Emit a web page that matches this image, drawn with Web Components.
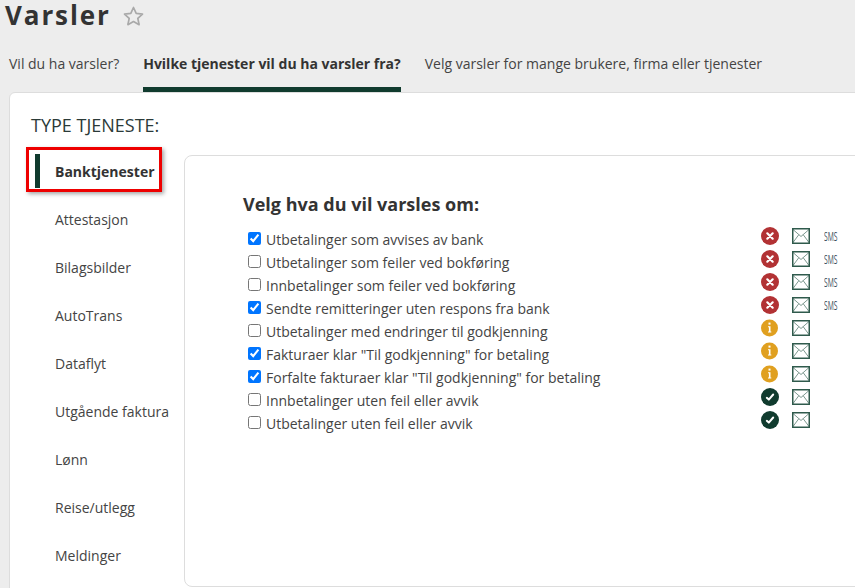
<!DOCTYPE html>
<html lang="nb"><head><meta charset="utf-8"><title>Varsler</title>
<style>
html,body{margin:0;height:100%;overflow:hidden;background:#ededed;font-family:"Open Sans",sans-serif;color:#333}
</style></head><body>
<varsler-page>
  <page-title slot="title">Varsler</page-title>
  <tab-item slot="tabs">Vil du ha varsler?</tab-item>
  <tab-item slot="tabs" active>Hvilke tjenester vil du ha varsler fra?</tab-item>
  <tab-item slot="tabs">Velg varsler for mange brukere, firma eller tjenester</tab-item>
  <nav-item slot="nav" active>Banktjenester</nav-item>
  <nav-item slot="nav">Attestasjon</nav-item>
  <nav-item slot="nav">Bilagsbilder</nav-item>
  <nav-item slot="nav">AutoTrans</nav-item>
  <nav-item slot="nav">Dataflyt</nav-item>
  <nav-item slot="nav">Utgående faktura</nav-item>
  <nav-item slot="nav">Lønn</nav-item>
  <nav-item slot="nav">Reise/utlegg</nav-item>
  <nav-item slot="nav">Meldinger</nav-item>
  <alert-row slot="rows" checked level="error" sms>Utbetalinger som avvises av bank</alert-row>
  <alert-row slot="rows" level="error" sms>Utbetalinger som feiler ved bokføring</alert-row>
  <alert-row slot="rows" level="error" sms>Innbetalinger som feiler ved bokføring</alert-row>
  <alert-row slot="rows" checked level="error" sms>Sendte remitteringer uten respons fra bank</alert-row>
  <alert-row slot="rows" level="info">Utbetalinger med endringer til godkjenning</alert-row>
  <alert-row slot="rows" checked level="info">Fakturaer klar "Til godkjenning" for betaling</alert-row>
  <alert-row slot="rows" checked level="info">Forfalte fakturaer klar "Til godkjenning" for betaling</alert-row>
  <alert-row slot="rows" level="ok">Innbetalinger uten feil eller avvik</alert-row>
  <alert-row slot="rows" level="ok">Utbetalinger uten feil eller avvik</alert-row>
</varsler-page>
<script>
function def(name, html, init){
  customElements.define(name, class extends HTMLElement{
    constructor(){super();this.attachShadow({mode:'open'}).innerHTML=html;}
    connectedCallback(){if(init)init(this);}
  });
}
def('varsler-page',`<style>
:host{display:block;height:588px}
header{box-sizing:border-box;height:44px;padding:2px 0 0 5px}
nav{display:flex;height:48px;padding-left:9px;gap:24px}
.card{box-sizing:border-box;margin:0 -30px 0 9px;height:520px;background:#fff;border:1px solid #ddd;border-radius:6px;padding:20px 0 0 21px}
h2{margin:0;font-size:18px;font-weight:400;line-height:24px;color:#2b3a38}
.cols{display:flex;margin-top:6px;align-items:flex-start}
.side{width:153px;flex:none;margin-top:5px}
.main{box-sizing:border-box;flex:1;height:432px;margin-top:12px;border:1px solid #ddd;border-radius:8px;padding:35px 0 0 58px}
h3{margin:0 0 9px;font-size:18px;font-weight:700;line-height:26px;color:#333}
</style>
<header><slot name="title"></slot></header>
<nav><slot name="tabs"></slot></nav>
<div class="card"><h2>TYPE TJENESTE:</h2>
<div class="cols"><div class="side"><slot name="nav"></slot></div>
<div class="main"><h3>Velg hva du vil varsles om:</h3><slot name="rows"></slot></div></div></div>`);

def('page-title',`<style>
:host{display:flex;align-items:center;gap:12px;height:26px}
h1{margin:0;font-size:26px;line-height:26px;font-weight:700;letter-spacing:1.9px;color:#333}
svg{display:block;margin-top:1px}
</style><h1><slot></slot></h1>
<svg width="21" height="20" viewBox="0 0 21 20"><path d="M10.500 1.500l2.700 5.900 6.300.7-4.700 4.300 1.300 6.300-5.600-3.200-5.600 3.200 1.300-6.300-4.700-4.300 6.300-.7z" fill="none" stroke="#a9a9a9" stroke-width="1.700" stroke-linejoin="round"/></svg>`);

def('tab-item',`<style>
:host{display:block;box-sizing:border-box;height:48px;font-size:14px;line-height:19px;padding-top:10px;color:#444;white-space:nowrap}
:host([active]){font-weight:700;color:#333;border-bottom:5px solid #103b2e}
</style><slot></slot>`);

def('nav-item',`<style>
:host{display:block;position:relative;box-sizing:border-box;height:48px;padding:14px 0 0 24px;font-size:14px;line-height:19px;color:#444;white-space:nowrap}
:host([active]){font-weight:700;color:#333}
.bar,.mark{display:none;position:absolute}
:host([active]) .bar{display:block;left:4px;top:6px;width:5px;height:34px;background:#103b2e}
:host([active]) .mark{display:block;left:-5px;top:-1px;width:130px;height:39px;border:3px solid #ee0000;box-shadow:2px 2px 4px rgba(0,0,0,.35)}
</style><span class="bar"></span><span class="mark"></span><slot></slot>`);

const ICONS={
 error:`<svg width="18" height="18" viewBox="0 0 18 18"><circle cx="9" cy="9" r="9" fill="#b23234"/><path d="M6.300 6.300l5.400 5.400M11.700 6.300l-5.400 5.400" stroke="#fff" stroke-width="2.200" stroke-linecap="round"/></svg>`,
 info:`<svg width="18" height="18" viewBox="0 0 18 18"><circle cx="8.500" cy="9" r="8.500" fill="#e0a020"/><rect x="7.500" y="3.600" width="2" height="2" fill="#fff"/><path d="M7 7.300h2.500v5.200h.8v1H7v-1h.9v-4.200H7z" fill="#fff"/></svg>`,
 ok:`<svg width="18" height="18" viewBox="0 0 18 18"><circle cx="9" cy="9" r="9" fill="#103b2e"/><path d="M5.800 9.800l2 1.800 4.400-5.100" fill="none" stroke="#fff" stroke-width="2" stroke-linecap="round" stroke-linejoin="round"/></svg>`
};
const MAIL=`<svg width="18" height="16" viewBox="0 0 18 16"><path d="M1 1.500l8 7 8-7M1 14.500l5.800-7.800M17 14.500l-5.800-7.800" fill="none" stroke="#7d9990" stroke-width="1"/><rect x=".75" y=".75" width="16.500" height="14.500" fill="none" stroke="#2f5a4c" stroke-width="1.500"/></svg>`;

def('alert-row',`<style>
:host{display:flex;height:23px;align-items:flex-start;font-size:14px;line-height:19px;color:#444}
input{flex:none;width:13px;height:13px;margin:6px 5px 0 5px;accent-color:#0075ff}
.t{flex:none;width:495px;padding-top:4px;white-space:nowrap}
.i{flex:none;width:31px;height:18px;margin-top:1px}
.i svg{display:block}
.m{flex:none;width:32px;height:16px;margin-top:2px}
.m svg{display:block}
.s{flex:none;width:14px;font-size:13.500px;line-height:18px;margin-top:1px;transform:scaleX(.5);transform-origin:0 50%;color:#3d5060;white-space:nowrap}
</style><input type="checkbox" tabindex="-1"><span class="t"><slot></slot></span><span class="i"></span><span class="m">${MAIL}</span><span class="s"></span>`,
el=>{
  const r=el.shadowRoot;
  r.querySelector('input').checked=el.hasAttribute('checked');
  r.querySelector('.i').innerHTML=ICONS[el.getAttribute('level')];
  if(el.hasAttribute('sms'))r.querySelector('.s').textContent='SMS';
});
</script>
</body></html>
